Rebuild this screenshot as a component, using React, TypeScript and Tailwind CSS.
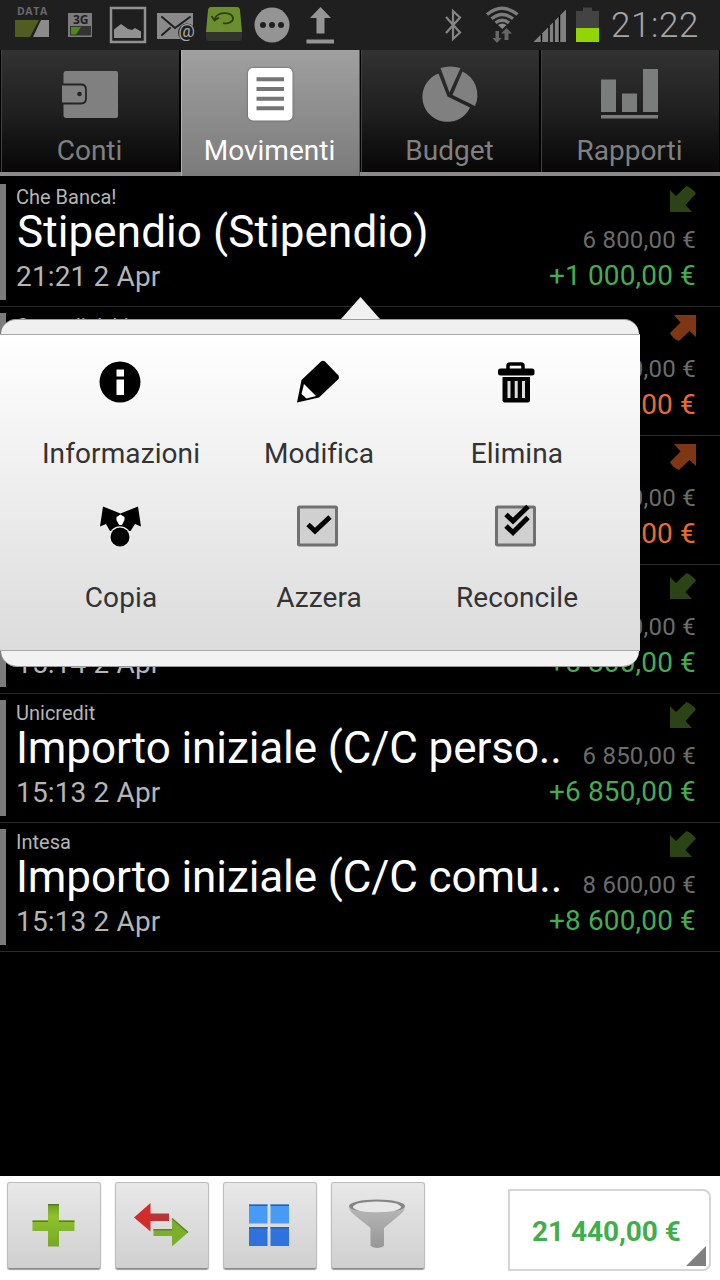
import type { ReactNode } from 'react';
import clsx from 'clsx';

interface Movement {
  account?: string;
  title?: string;
  time?: string;
  balance: string;
  amount: string;
  income: boolean;
}

const movements: Movement[] = [
  { account: 'Che Banca!', title: 'Stipendio (Stipendio)', time: '21:21 2 Apr', balance: '6 800,00 €', amount: '+1 000,00 €', income: true },
  { account: 'Carta di debito', balance: '0,00 €', amount: ',00 €', income: false },
  { balance: '0,00 €', amount: ',00 €', income: false },
  { time: '15:14 2 Apr', balance: '0,00 €', amount: '+5 800,00 €', income: true },
  { account: 'Unicredit', title: 'Importo iniziale (C/C perso..', time: '15:13 2 Apr', balance: '6 850,00 €', amount: '+6 850,00 €', income: true },
  { account: 'Intesa', title: 'Importo iniziale (C/C comu..', time: '15:13 2 Apr', balance: '8 600,00 €', amount: '+8 600,00 €', income: true },
];

function StatusBar() {
  return (
    <div className="flex h-[50px] shrink-0 items-start bg-[#1f1f1f]">
      <svg width="60" height="50" viewBox="0 0 60 50">
        <text x="17" y="15" fontSize="10.5" fontWeight="700" letterSpacing="0.6" fill="#6b6b6b" fontFamily="Open Sans, sans-serif">DATA</text>
        <path d="M15 20h24l-9 17H15z" fill="#515c22" />
        <path d="M41 20h8v17H33z" fill="#8b8b8b" />
      </svg>
      <svg width="40" height="50" viewBox="60 0 40 50">
        <path d="M68 13h24v24H68z" fill="#7c7c7c" />
        <text x="73" y="24" fontSize="12" fontWeight="700" fill="#1f1f1f" fontFamily="Open Sans, sans-serif">3G</text>
        <path d="M70 26h21v9.500H70z" fill="#333" />
        <path d="M71 27h10l-5 7.500h-5z" fill="#4c8a14" />
      </svg>
      <svg width="50" height="50" viewBox="100 0 50 50">
        <path d="M111 8h34v34h-34z" fill="none" stroke="#919191" strokeWidth="2.500" />
        <path d="M114 38v-8.500l7-5.500 7 5 4 1 3-2 6 3.500v6.500z" fill="#919191" />
      </svg>
      <svg width="50" height="50" viewBox="150 0 50 50">
        <path d="M157 13h36v26h-36z" fill="#8a8a8a" />
        <path d="M162 17l13 11 15-11M162 35l8-7" fill="none" stroke="#1f1f1f" strokeWidth="2" strokeLinecap="round" />
        <circle cx="187" cy="32.500" r="9" fill="#1f1f1f" />
        <text x="178.300" y="37" fontSize="18.500" fill="#a8a8a8" fontFamily="Roboto, sans-serif">@</text>
      </svg>
      <svg width="50" height="50" viewBox="200 0 50 50">
        <path d="M211 7h26q2.500 0 3 3l2 22h-36l2-22q.5-3 3-3z" fill="#6c8f2d" />
        <path d="M206 32h36v6q0 3-3 3h-30q-3 0-3-3z" fill="#30332e" />
        <path d="M215 20c0-9 18-9 18-1.500 0 4.500-8 5.500-10 4.500M211.500 16l3 4.500 4.500-3" fill="none" stroke="#303d19" strokeWidth="1.800" />
      </svg>
      <svg width="50" height="50" viewBox="250 0 50 50">
        <circle cx="272" cy="25" r="17.500" fill="#949494" />
        <g fill="#1f1f1f">
          <circle cx="263" cy="25" r="3" />
          <circle cx="272" cy="25" r="3" />
          <circle cx="281" cy="25" r="3" />
        </g>
      </svg>
      <svg width="50" height="50" viewBox="300 0 50 50">
        <path d="M320.500 7l10.500 11h-6.500v15.500h-8V18H310zM306.500 39.500H334v4h-27.500z" fill="#959595" />
      </svg>
      <div className="flex-1" />
      <svg width="40" height="50" viewBox="440 0 40 50">
        <path d="M446 17l14 15.500-7 6.500V11l7 6.500L446 33" fill="none" stroke="#858585" strokeWidth="2.200" />
      </svg>
      <svg width="40" height="50" viewBox="480 0 40 50">
        <g fill="none" stroke="#7c7c7c" strokeWidth="3.300">
          <path d="M487 14.500q15.200-12.500 30.500 0" />
          <path d="M491.500 18.800q10.700-8.600 21.500 0" />
          <path d="M495.500 22.800q6.700-5 13.500 0" />
        </g>
        <path d="M498 25q4.200-3 8.500 0l-4.200 4z" fill="#8a8a8a" />
        <path d="M495.500 31h3.500v7h2.500l-4.500 5-4.500-5h3zM504.500 40v-6.500H501l5.500-5.500 5.500 5.500h-3.500V40z" fill="#666" />
      </svg>
      <svg width="50" height="50" viewBox="520 0 50 50">
        <path d="M533.500 42L566 9.500V42z" fill="#818181" />
        <path d="M541.500 34v8M549 26v16M554 21v21M559.500 15.500V42" stroke="#000" strokeWidth="1.400" />
      </svg>
      <svg width="40" height="50" viewBox="570 0 40 50">
        <path d="M576 11h7V7.500h9V11h7v17h-23z" fill="#434343" />
        <path d="M576 28h23v14h-23z" fill="#93d500" />
      </svg>
      <span className="w-[110px] pl-[1px] text-[35px] leading-[51px] font-light tracking-[0.6px] whitespace-nowrap text-[#a5a5a5]">21:22</span>
    </div>
  );
}

function WalletIcon() {
  return (
    <svg width="60" height="56" viewBox="60 66 60 56">
      <path d="M66 71h50q2 0 2 2v43q0 2-2 2H66q-2 0-2.500-2V73q.5-2 2.500-2z" fill="#808080" />
      <path d="M62 84.500h19q5 0 5 5v9q0 5-5 5H62z" fill="#808080" />
      <path d="M62 84.500h19q5 0 5 5v9q0 5-5 5H62" fill="none" stroke="#242424" strokeWidth="1.800" />
      <circle cx="79.500" cy="94" r="2.300" fill="#222" />
    </svg>
  );
}

function MovementsIcon() {
  return (
    <svg width="60" height="56" viewBox="240 66 60 56" className="drop-shadow-[0_0_1px_#555]">
      <rect x="248" y="68" width="44.500" height="52.500" rx="5" fill="#fff" />
      <path d="M256.500 79.300h27.500M256.500 89h27.500M256.500 98.700h27.500M256.500 108.300h27.500" stroke="#757575" strokeWidth="4" />
    </svg>
  );
}

function BudgetIcon() {
  return (
    <svg width="60" height="56" viewBox="420 66 60 56" overflow="visible" fill="#808080">
      <path d="M438.500 73.500A25 25 0 1 0 470 107.500L447.500 96.500z" />
      <path d="M440.500 68q9.500-3 20 0l-11 24.500z" />
      <path d="M462.500 71.500A26 26 0 0 1 475 106l-22.500-11z" />
    </svg>
  );
}

function ReportsIcon() {
  return (
    <svg width="60" height="56" viewBox="600 66 60 56" fill="#7b7c7c">
      <path d="M601 79.500h15V112h-15zM622 93.500h15V112h-15zM643 69h15v43h-15zM601 115h57v3.500h-57z" />
    </svg>
  );
}

function Tab({ label, icon, active }: { label: string; icon: ReactNode; active?: boolean }) {
  return (
    <div
      className={clsx(
        'ml-[1px] flex flex-1 flex-col items-center border-x bg-linear-to-b pt-[16px]',
        active
          ? 'relative z-10 -mb-[4px] border-l-[#b0b0b0] border-r-[#5a5a5a] from-[#a0a0a0] to-[#7b7b7b] text-white'
          : 'border-l-[#404040] border-r-black from-[#323232] via-[#202020] to-[#070707] text-[#808080]',
      )}
    >
      <div className="-ml-[1px]">{icon}</div>
      <span className="mt-[11px] -ml-[2px] text-[28px] leading-[36px]">{label}</span>
    </div>
  );
}

function TabBar() {
  return (
    <div className="flex h-[126px] shrink-0 border-b-[4px] border-[#8b898a] bg-black">
      <Tab label="Conti" icon={<WalletIcon />} />
      <Tab label="Movimenti" icon={<MovementsIcon />} active />
      <Tab label="Budget" icon={<BudgetIcon />} />
      <Tab label="Rapporti" icon={<ReportsIcon />} />
    </div>
  );
}

function DirectionArrow({ income }: { income: boolean }) {
  return income ? (
    <svg width="26" height="26" viewBox="0 0 26 26">
      <path d="M0 4l6 6L16.500 0Q22 2 26 7.500L15.500 19l6.500 7H0z" fill="#2c4315" />
    </svg>
  ) : (
    <svg width="26" height="26" viewBox="0 0 26 26">
      <path d="M4 0h22v22l-6.500-6L9 26Q2 23 0 18L10.500 7.500z" fill="#7e3714" />
    </svg>
  );
}

function MovementRow({ item }: { item: Movement }) {
  const shortened = item.title?.endsWith('..');

  return (
    <div className="flex h-[129px] border-b border-[#2a2a2a]">
      <div className="mt-[6px] h-[116px] w-[6px] bg-[#7b7b7b]" />
      <div className="flex flex-1 flex-col pt-[7px] pl-[10px] whitespace-nowrap">
        <span className="h-[24px] text-[20px] leading-[24px] text-[#b5b5b5]">{item.account}</span>
        <span
          className={clsx(
            'h-[46px] w-0 text-[44px] leading-[46px] text-white',
            shortened ? 'tracking-[-0.1px]' : 'pl-[1px] tracking-[0.1px]',
          )}
        >
          {item.title}
        </span>
        <span className="text-[28px] leading-[43px] tracking-[0.15px] text-[#b5b5b5]">{item.time}</span>
      </div>
      <div className="flex flex-col items-end pt-[8px] pr-[24px] whitespace-nowrap">
        <DirectionArrow income={item.income} />
        <span className="mt-[11px] text-[24px] leading-[34px] tracking-[0.25px] text-[#6c6c6c]">{item.balance}</span>
        <span className={clsx('text-[28px] leading-[38px] tracking-[0.15px]', item.income ? 'text-[#43ad50]' : 'text-[#ea6b32]')}>
          {item.amount}
        </span>
      </div>
    </div>
  );
}

const actions: { label: string; icon: ReactNode }[] = [
  {
    label: 'Informazioni',
    icon: (
      <>
        <circle cx="21" cy="21" r="20.500" />
        <path d="M17.500 8.500H25v7h-7.500zM17.500 18.500H25v15.500h-7.500z" fill="#fff" />
      </>
    ),
  },
  {
    label: 'Modifica',
    icon: (
      <>
        <path d="M0 41.500L4.500 19 24 .5q2-1.500 4 0l13.500 14q1 2 0 3.500L22 36.500z" />
        <path d="M7 23l12 12-9.500 2.500-5-4.500z" fill="#fff" />
      </>
    ),
  },
  {
    label: 'Elimina',
    icon: (
      <>
        <path d="M13 9V5q0-2 2-2h11q2 0 2 2v4" fill="none" stroke="#000" strokeWidth="3.500" />
        <rect x="3" y="7.500" width="36.500" height="7" rx="2.500" />
        <path d="M7.500 16h27.500v23.500q0 2-2 2H9.500q-2 0-2-2z" />
        <path d="M14 20v17M21.200 20v17M28.500 20v17" stroke="#ddd" strokeWidth="3" />
      </>
    ),
  },
  {
    label: 'Copia',
    icon: (
      <>
        <path d="M4 1.500l17.500 7L39 1.500l3 20-6-2.500-4.500 7H11L7 19 1 21.500z" />
        <path d="M17.500 12l4-2.500 4 2.500v3L23 20h-3l-2.500-5z" fill="#fff" />
        <circle cx="21" cy="32" r="10.800" fill="#efefef" />
        <circle cx="21" cy="32" r="9.500" />
      </>
    ),
  },
  {
    label: 'Azzera',
    icon: (
      <>
        <rect x="1.500" y="2" width="38" height="38" rx="1" fill="#d0d0d0" stroke="#707070" strokeWidth="3" />
        <path d="M11 19.500l7 6.500L33 12" fill="none" stroke="#000" strokeWidth="5" />
      </>
    ),
  },
  {
    label: 'Reconcile',
    icon: (
      <>
        <rect x="1.500" y="2" width="38" height="38" rx="1" fill="#d0d0d0" stroke="#707070" strokeWidth="3" />
        <path d="M11 9.500l7 6.500L33 1.500M11 21l7 6.500L33 12.500" fill="none" stroke="#000" strokeWidth="5" />
      </>
    ),
  },
];

function QuickActions() {
  return (
    <div className="absolute top-[297px] left-0 z-20 w-[640px]">
      <svg width="40" height="22" viewBox="0 0 40 22" className="ml-[341px]">
        <path d="M0 22L19.500 0 39 22z" fill="#f0f0f0" />
      </svg>
      <div className="mr-[1px] ml-[1px] h-[15px] rounded-t-[17px] border-t border-[#9a9a9a] bg-[#f0f0f0]" />
      <div className="grid h-[317px] grid-cols-[198px_198px_198px] content-start border-y border-[#a8a8a8] bg-linear-to-b from-white to-[#dcdcdc] pt-[26px] pl-[22px]">
        {actions.map((action) => (
          <div key={action.label} className="flex h-[144px] flex-col items-center">
            <svg width="42" height="42" viewBox="0 0 42 42" className="-ml-[3px] overflow-visible">
              {action.icon}
            </svg>
            <span className="mt-[33px] text-[28px] leading-[36px] tracking-[0.1px] text-[#333]">{action.label}</span>
          </div>
        ))}
      </div>
      <div className="mr-[1px] ml-[1px] h-[16px] rounded-b-[17px] border-b border-[#9a9a9a] bg-[#f2f2f2]" />
    </div>
  );
}

function ToolButton({ children }: { children: ReactNode }) {
  return (
    <div className="flex h-[87px] w-[94px] items-center justify-center rounded-[3px] border border-[#bdbdbd] border-b-[#8a8a8a] bg-linear-to-b from-[#e8e8e8] to-[#d0d0d0] shadow-[0_1px_1px_#999]">
      <svg width="60" height="60" viewBox="0 0 60 60">
        {children}
      </svg>
    </div>
  );
}

function BottomBar() {
  return (
    <div className="flex h-[104px] shrink-0 items-start bg-white pt-[6px] pr-[9px] pl-[7px]">
      <div className="flex gap-[14px]">
        <ToolButton>
          <defs>
            <linearGradient id="plus" x1="0" y1="0" x2="0" y2="1">
              <stop offset="0" stopColor="#6d9c22" />
              <stop offset="0.3" stopColor="#8fc22e" />
              <stop offset="1" stopColor="#76a726" />
            </linearGradient>
          </defs>
          <path d="M24 8h11v16.500h15.500v10.500H35v15.500H24V35H8.500V24.500H24z" fill="url(#plus)" />
          <path d="M24 8.700h11M8.500 25.200H24M35 25.200h15.500" stroke="#587c20" strokeWidth="1.600" />
        </ToolButton>
        <ToolButton>
          <path d="M2 21.500L18.500 7v10.500H37V25H18.500v10.500z" fill="#d32a2a" />
          <path d="M18.500 18H37v7H18.500z" fill="#b93535" />
          <path d="M21.500 33h18.500V22.500L56 36.500 40 50.500V40H21.500z" fill="#7cb02a" />
          <path d="M21.500 33.700H40M40 22.500L56 36.500" stroke="#5e842a" strokeWidth="1.600" />
        </ToolButton>
        <ToolButton>
          <path d="M9 8.500h18.500v19H9zM30.500 8.500H49v19H30.500z" fill="#489bf5" />
          <path d="M9 31h18.500v19H9zM30.500 31H49v19H30.500z" fill="#2f72dc" />
          <path d="M9 9.200h18.500M30.500 9.200H49M9 31.700h18.500M30.500 31.700H49" stroke="#2c5fa8" strokeWidth="1.600" />
        </ToolButton>
        <ToolButton>
          <defs>
            <linearGradient id="funnel" x1="0" y1="0" x2="0" y2="1">
              <stop offset="0" stopColor="#b8b8b8" />
              <stop offset="1" stopColor="#969696" />
            </linearGradient>
          </defs>
          <path d="M1 10q0 4 3 7l18.500 15v18q7 4 13.500 0V32L54 17q3-3 3-7z" fill="url(#funnel)" />
          <ellipse cx="29" cy="10" rx="28" ry="6.500" fill="#858585" />
          <ellipse cx="29" cy="11" rx="24" ry="5.500" fill="#e8e8e8" />
        </ToolButton>
      </div>
      <div className="relative mt-[7px] ml-auto flex h-[82px] w-[203px] items-center rounded-r-[8px] border-2 border-[#d5d5d5] pt-[3px] pl-[22px]">
        <span className="text-[28px] leading-[36px] font-bold tracking-[-0.05px] whitespace-nowrap text-[#3fae4b]">21 440,00 €</span>
        <svg width="20" height="20" viewBox="0 0 20 20" className="absolute right-[3px] bottom-[3px]">
          <path d="M20 0v20H0z" fill="#808080" />
        </svg>
      </div>
    </div>
  );
}

export default function App() {
  return (
    <div className="relative flex h-[1280px] w-[720px] flex-col overflow-hidden bg-black font-[Roboto,sans-serif]">
      <StatusBar />
      <TabBar />
      <div className="flex-1 pt-[2px]">
        {movements.map((item, i) => (
          <MovementRow key={i} item={item} />
        ))}
      </div>
      <QuickActions />
      <BottomBar />
    </div>
  );
}
